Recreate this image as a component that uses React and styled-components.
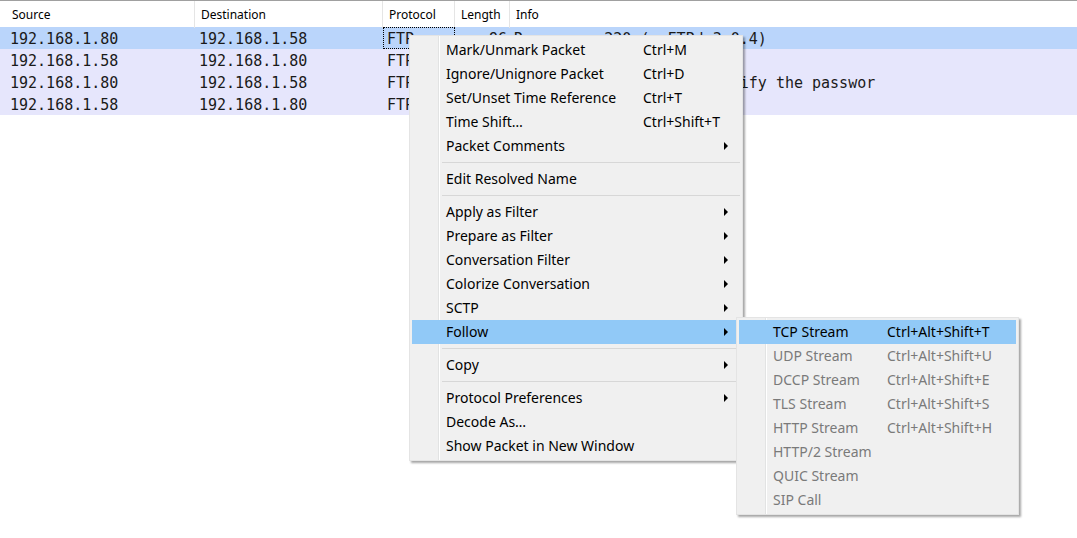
import styled, { createGlobalStyle } from "styled-components";

const GlobalStyle = createGlobalStyle`
  body {
    margin: 0;
    background: #ffffff;
    overflow: hidden;
  }
`;

const uiFont = `"Noto Sans", "Open Sans", sans-serif`;
const monoFont = `"DejaVu Sans Mono", "Liberation Mono", monospace`;
const columns = "195px 188px 72px 55px 1fr";

const Page = styled.div`
  position: relative;
  width: 1077px;
  height: 538px;
  border-top: 1px solid #a0a0a0;
  box-sizing: border-box;
  background: #ffffff;
`;

const HeaderRow = styled.div`
  display: grid;
  grid-template-columns: ${columns};
  height: 26px;
  background: #ffffff;
`;

const HeaderCell = styled.div`
  font-family: ${uiFont};
  font-size: 12px;
  line-height: 26px;
  padding-top: 1px;
  box-sizing: border-box;
  color: #000000;
  padding-left: ${(p) => (p.first ? "12px" : "6px")};
  border-right: ${(p) => (p.last ? "none" : "1px solid #e5e5e5")};
  white-space: nowrap;
`;

const PacketRow = styled.div`
  display: grid;
  grid-template-columns: ${columns};
  height: 22px;
  background: ${(p) => (p.selected ? "#bad5fb" : "#e6e6fc")};
`;

const Cell = styled.div`
  font-family: ${monoFont};
  font-size: 15px;
  line-height: 22px;
  color: #1a1a1a;
  padding: ${(p) => (p.right ? "1px 3px 0 0" : p.first ? "1px 0 0 10px" : "1px 0 0 4px")};
  text-align: ${(p) => (p.right ? "right" : "left")};
  white-space: nowrap;
  overflow: hidden;
  box-sizing: border-box;
  outline: ${(p) => (p.focused ? "1px dotted #000000" : "none")};
  outline-offset: -1px;
`;

const Menu = styled.div`
  position: absolute;
  left: ${(p) => p.x}px;
  top: ${(p) => p.y}px;
  width: ${(p) => p.w}px;
  box-sizing: border-box;
  padding: 2px;
  background-color: #f0f0f0;
  background-image: linear-gradient(
    to right,
    transparent 28px,
    #e2e3e3 28px,
    #e2e3e3 29px,
    #ffffff 29px,
    #ffffff 30px,
    transparent 30px
  );
  border: 1px solid #e4e4e4;
  box-shadow: 2px 2px 2px rgba(0, 0, 0, 0.35);
  font-family: ${uiFont};
  font-size: 14px;
`;

const Item = styled.div`
  display: grid;
  grid-template-columns: ${(p) => p.labelWidth}px 1fr 16px;
  align-items: center;
  height: 24px;
  box-sizing: border-box;
  padding: 0 0 2px 34px;
  background: ${(p) => (p.active ? "#91c9f7" : "transparent")};
  color: ${(p) => (p.disabled ? "#7a7a7a" : "#000000")};
  white-space: nowrap;
`;

const Shortcut = styled.span``;

const Arrow = styled.span`
  width: 0;
  height: 0;
  margin-top: 2px;
  border-top: 4px solid transparent;
  border-bottom: 4px solid transparent;
  border-left: 4px solid #000000;
`;

const Separator = styled.div`
  height: 9px;
  display: flex;
  align-items: center;
  padding-left: 30px;
  &::after {
    content: "";
    flex: 1;
    height: 1px;
    background: #d7d7d7;
  }
`;

const packets = [
  ["192.168.1.80", "192.168.1.58", "FTP", "96", "Response: 220 (vsFTPd 3.0.4)"],
  ["192.168.1.58", "192.168.1.80", "FTP", "80", "Request: USER ftpuser"],
  ["192.168.1.80", "192.168.1.58", "FTP", "100", "Response: 331 Please specify the passwor"],
  ["192.168.1.58", "192.168.1.80", "FTP", "80", "Request: PASS ftp"],
];

const menuItems = [
  { label: "Mark/Unmark Packet", key: "Ctrl+M" },
  { label: "Ignore/Unignore Packet", key: "Ctrl+D" },
  { label: "Set/Unset Time Reference", key: "Ctrl+T" },
  { label: "Time Shift…", key: "Ctrl+Shift+T" },
  { label: "Packet Comments", sub: true },
  "sep",
  { label: "Edit Resolved Name" },
  "sep",
  { label: "Apply as Filter", sub: true },
  { label: "Prepare as Filter", sub: true },
  { label: "Conversation Filter", sub: true },
  { label: "Colorize Conversation", sub: true },
  { label: "SCTP", sub: true },
  { label: "Follow", sub: true, active: true },
  "sep",
  { label: "Copy", sub: true },
  "sep",
  { label: "Protocol Preferences", sub: true },
  { label: "Decode As…" },
  { label: "Show Packet in New Window" },
];

const followItems = [
  { label: "TCP Stream", key: "Ctrl+Alt+Shift+T", active: true },
  { label: "UDP Stream", key: "Ctrl+Alt+Shift+U", disabled: true },
  { label: "DCCP Stream", key: "Ctrl+Alt+Shift+E", disabled: true },
  { label: "TLS Stream", key: "Ctrl+Alt+Shift+S", disabled: true },
  { label: "HTTP Stream", key: "Ctrl+Alt+Shift+H", disabled: true },
  { label: "HTTP/2 Stream", disabled: true },
  { label: "QUIC Stream", disabled: true },
  { label: "SIP Call", disabled: true },
];

const MenuEntries = ({ items, labelWidth }) =>
  items.map((it, i) =>
    it === "sep" ? (
      <Separator key={i} />
    ) : (
      <Item key={i} labelWidth={labelWidth} active={it.active} disabled={it.disabled}>
        <span>{it.label}</span>
        <Shortcut>{it.key}</Shortcut>
        {it.sub ? <Arrow /> : <span />}
      </Item>
    )
  );

const headers = ["Source", "Destination", "Protocol", "Length", "Info"];

const App = () => {
  return (
    <>
      <GlobalStyle />
      <Page>
        <HeaderRow>
          {headers.map((h, i) => (
            <HeaderCell key={h} first={i === 0} last={i === headers.length - 1}>
              {h}
            </HeaderCell>
          ))}
        </HeaderRow>
        {packets.map((p, i) => (
          <PacketRow key={i} selected={i === 0}>
            <Cell first>{p[0]}</Cell>
            <Cell>{p[1]}</Cell>
            <Cell focused={i === 0}>{p[2]}</Cell>
            <Cell right>{p[3]}</Cell>
            <Cell>{p[4]}</Cell>
          </PacketRow>
        ))}
        <Menu x={409} y={34} w={334}>
          <MenuEntries items={menuItems} labelWidth={197} />
        </Menu>
        <Menu x={736} y={316} w={283}>
          <MenuEntries items={followItems} labelWidth={114} />
        </Menu>
      </Page>
    </>
  );
};

export default App;
